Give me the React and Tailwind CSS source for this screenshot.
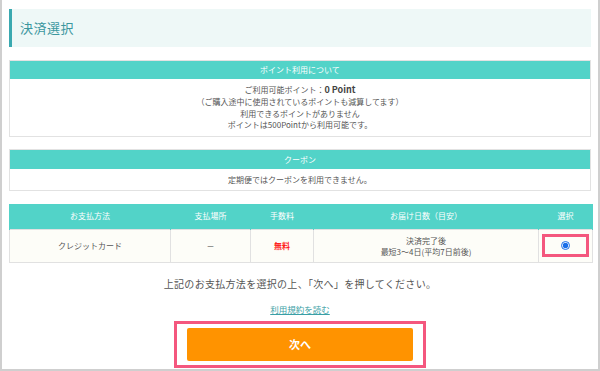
export default function App() {
  const th = 'font-normal text-white text-[8px] text-center border-x border-[#52d3c8]'
  const td = 'border border-[#e1e1e1] text-center text-[8px] text-[#555]'
  return (
    <div className="w-[600px] h-[371px] overflow-hidden bg-white border-x-2 border-b-2 border-[#cfcfcf] px-[7px] pt-[9px] font-['Noto_Sans_CJK_JP',sans-serif] text-[#555]">
      {/* 見出し */}
      <div className="h-[38px] flex items-center border-l-[3px] border-[#3aa9b0] bg-[#eef8f7] pl-[8px] text-[13px] text-[#3c979f] tracking-[0.5px]">
        決済選択
      </div>

      {/* ポイント */}
      <div className="mt-[13px] border border-[#e2e2e2]">
        <div className="h-[18px] flex items-center justify-center bg-[#52d3c8] text-white text-[8px]">ポイント利用について</div>
        <div className="py-[5px] text-center text-[8px] leading-[11.8px]">
          <p>ご利用可能ポイント：<span className="font-semibold text-[9px] text-[#444]">0 Point</span></p>
          <p>（ご購入途中に使用されているポイントも減算してます）</p>
          <p>利用できるポイントがありません</p>
          <p>ポイントは500Pointから利用可能です。</p>
        </div>
      </div>

      {/* クーポン */}
      <div className="mt-[12px] border border-[#e2e2e2]">
        <div className="h-[19px] flex items-center justify-center bg-[#52d3c8] text-white text-[8px]">クーポン</div>
        <div className="h-[21px] flex items-center justify-center text-[8px]">定期便ではクーポンを利用できません。</div>
      </div>

      {/* 支払方法 */}
      <table className="mt-[13px] w-[583px] table-fixed border-collapse">
        <colgroup>
          <col className="w-[161px]" />
          <col className="w-[80px]" />
          <col className="w-[63px]" />
          <col className="w-[225px]" />
          <col className="w-[54px]" />
        </colgroup>
        <thead>
          <tr className="h-[25px] bg-[#52d3c8]">
            <th className={th}>お支払方法</th>
            <th className={th}>支払場所</th>
            <th className={th}>手数料</th>
            <th className={th}>お届け日数（目安）</th>
            <th className={th}>選択</th>
          </tr>
        </thead>
        <tbody>
          <tr className="h-[33px] bg-[#fdfdf8]">
            <td className={td}>クレジットカード</td>
            <td className={td}>－</td>
            <td className={`${td} text-[#ff1a1a] font-bold`}>無料</td>
            <td className={`${td} leading-[11px]`}>
              <p>決済完了後</p>
              <p>最短3～4日(平均7日前後)</p>
            </td>
            <td className={`${td} p-[3px]`}>
              <div className="h-[23px] border-[3px] border-[#f4577e] flex items-center justify-center">
                <input type="radio" defaultChecked className="w-[9px] h-[9px] accent-[#1a6fe8]" />
              </div>
            </td>
          </tr>
        </tbody>
      </table>

      <div className="flex flex-col items-center">
        <p className="mt-[13px] text-[10px] leading-[15px] text-[#555] tracking-[0.3px]">上記のお支払方法を選択の上、「次へ」を押してください。</p>
        <a href="#" className="mt-[12px] text-[8.5px] leading-[12px] text-[#3a9fa6] underline">利用規約を読む</a>
        <div className="mt-[6px] w-[252px] border-[3px] border-[#f4577e] px-[10px] pt-[4px] pb-[4px]">
          <button className="w-full h-[33px] rounded-[2px] bg-[#ff9300] text-white text-[11px] font-bold">次へ</button>
        </div>
      </div>
    </div>
  )
}
